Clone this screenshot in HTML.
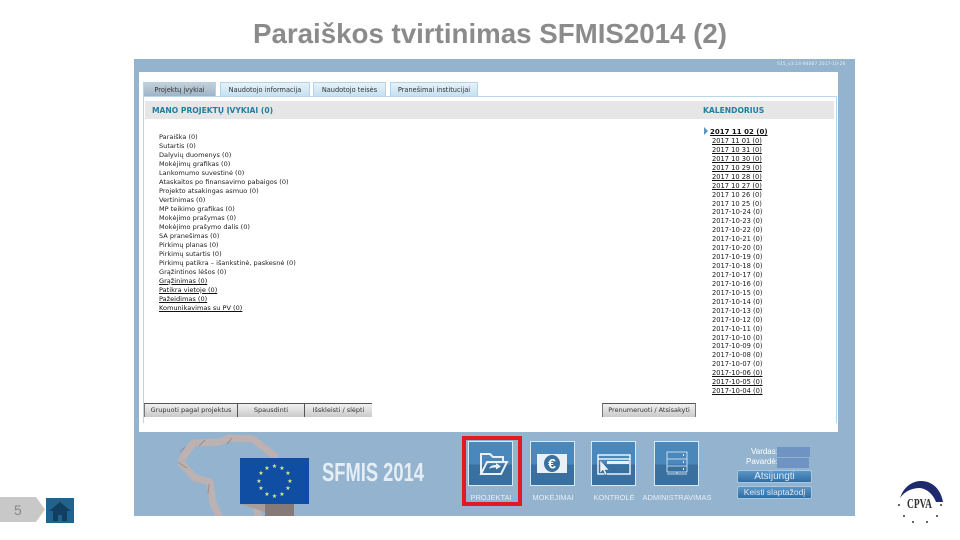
<!DOCTYPE html>
<html lang="lt"><head><meta charset="utf-8"><title>SFMIS2014</title>
<style>
html,body{margin:0;padding:0;background:#fff}
body{width:960px;height:540px;position:relative;overflow:hidden;font-family:"DejaVu Sans","Liberation Sans",sans-serif}
.a{position:absolute}
.title{left:253px;top:15px;width:474px;font:bold 27.7px/38px "Liberation Sans",sans-serif;color:#8b8b8b;white-space:nowrap}
.wrap{left:0;top:0;width:960px;height:540px;filter:blur(.35px)}
.panel{left:134px;top:59px;width:721px;height:457px;background:#94b3ce}
.white{left:139px;top:72px;width:699px;height:360px;background:#fff}
.tab{top:82px;height:14px;background:linear-gradient(#e6f2fa,#c4e0f2);border:1px solid #b5d3e6;border-bottom:0;box-sizing:border-box;font-size:6.6px;line-height:14px;text-align:center;color:#333;white-space:nowrap}
.frame{left:143px;top:96px;width:694px;height:327px;border:1px solid #b9d6e8;border-bottom:0;box-sizing:border-box}
.bar{left:145px;top:101px;width:689px;height:18px;background:#e6e6e6}
.h{font-size:7.6px;font-weight:bold;color:#1e7fa0;top:105px;line-height:11px;white-space:nowrap}
.row{left:159px;font-size:6.57px;line-height:9px;color:#222;white-space:nowrap;margin-top:.5px}
.cal{left:712px;font-size:6.7px;line-height:9px;color:#222;white-space:nowrap}
.u{text-decoration:underline;color:#111}
.btn{top:403px;height:14px;background:linear-gradient(#f0f0f0,#c9c9c9);border-top:1px solid #555;box-sizing:border-box;font-size:6.5px;line-height:13px;text-align:center;color:#333;white-space:nowrap}
.tile{top:441px;width:45px;height:45px;box-sizing:border-box;border:1px solid #d8e8f4;background:linear-gradient(#4a88bc 0,#4a88bc 52%,#39709f 52%,#39709f 100%)}
.lab{top:493px;font:7.5px/10px "Liberation Sans",sans-serif;color:#e6eff6;text-align:center;white-space:nowrap}
.side{font:8px/10px "Liberation Sans",sans-serif;color:#fff;white-space:nowrap}
.sbtn{left:737px;width:75px;height:13px;box-sizing:border-box;background:linear-gradient(#5b95c6,#2f6ea5);border:1px solid #a9c8e0;border-radius:2px;color:#dfeaf4;font:8.5px/11px "Liberation Sans",sans-serif;text-align:center;white-space:nowrap}
</style></head><body>
<div class="a title">Paraiškos tvirtinimas SFMIS2014 (2)</div>
<div class="a wrap">
<div class="a panel"></div>
<div class="a white"></div>
<div class="a" style="left:777px;top:62px;font-size:4.6px;line-height:6px;color:#e4edf4;white-space:nowrap">S15_v3.14-94087 2017-10-26</div>
<div class="a frame"></div>
<div class="a tab" style="left:143px;width:73px;background:linear-gradient(#c3cfd9,#9db5c9);color:#333">Projektų įvykiai</div>
<div class="a tab" style="left:220px;width:90px">Naudotojo informacija</div>
<div class="a tab" style="left:313px;width:73px">Naudotojo teisės</div>
<div class="a tab" style="left:390px;width:88px">Pranešimai institucijai</div>
<div class="a bar"></div>
<div class="a h" style="left:152px">MANO PROJEKTŲ ĮVYKIAI (0)</div>
<div class="a h" style="left:703px">KALENDORIUS</div>

<div class="a row" style="top:132px">Paraiška (0)</div>
<div class="a row" style="top:141px">Sutartis (0)</div>
<div class="a row" style="top:150px">Dalyvių duomenys (0)</div>
<div class="a row" style="top:159px">Mokėjimų grafikas (0)</div>
<div class="a row" style="top:168px">Lankomumo suvestinė (0)</div>
<div class="a row" style="top:177px">Ataskaitos po finansavimo pabaigos (0)</div>
<div class="a row" style="top:186px">Projekto atsakingas asmuo (0)</div>
<div class="a row" style="top:195px">Vertinimas (0)</div>
<div class="a row" style="top:204px">MP teikimo grafikas (0)</div>
<div class="a row" style="top:213px">Mokėjimo prašymas (0)</div>
<div class="a row" style="top:222px">Mokėjimo prašymo dalis (0)</div>
<div class="a row" style="top:231px">SA pranešimas (0)</div>
<div class="a row" style="top:240px">Pirkimų planas (0)</div>
<div class="a row" style="top:249px">Pirkimų sutartis (0)</div>
<div class="a row" style="top:258px">Pirkimų patikra – išankstinė, paskesnė (0)</div>
<div class="a row" style="top:267px">Grąžintinos lėšos (0)</div>
<div class="a row u" style="top:276px">Grąžinimas (0)</div>
<div class="a row u" style="top:285px">Patikra vietoje (0)</div>
<div class="a row u" style="top:294px">Pažeidimas (0)</div>
<div class="a row u" style="top:303px">Komunikavimas su PV (0)</div>

<svg class="a" style="left:703px;top:127px" width="7" height="9"><path d="M1 0l4 4-4 4z" fill="#5b95c6"/></svg>
<div class="a u" style="left:710px;top:127px;font-size:7px;font-weight:bold;line-height:10px;white-space:nowrap">2017 11 02 (0)</div>
<div class="a cal u" style="top:137px">2017 11 01 (0)</div>
<div class="a cal u" style="top:145.900px">2017 10 31 (0)</div>
<div class="a cal u" style="top:154.900px">2017 10 30 (0)</div>
<div class="a cal u" style="top:163.800px">2017 10 29 (0)</div>
<div class="a cal u" style="top:172.700px">2017 10 28 (0)</div>
<div class="a cal u" style="top:181.700px">2017 10 27 (0)</div>
<div class="a cal" style="top:190.600px">2017 10 26 (0)</div>
<div class="a cal" style="top:199.500px">2017 10 25 (0)</div>
<div class="a cal" style="top:208.400px">2017-10-24 (0)</div>
<div class="a cal" style="top:217.400px">2017-10-23 (0)</div>
<div class="a cal" style="top:226.300px">2017-10-22 (0)</div>
<div class="a cal" style="top:235.200px">2017-10-21 (0)</div>
<div class="a cal" style="top:244.200px">2017-10-20 (0)</div>
<div class="a cal" style="top:253.100px">2017-10-19 (0)</div>
<div class="a cal" style="top:262px">2017-10-18 (0)</div>
<div class="a cal" style="top:271px">2017-10-17 (0)</div>
<div class="a cal" style="top:279.900px">2017-10-16 (0)</div>
<div class="a cal" style="top:288.800px">2017-10-15 (0)</div>
<div class="a cal" style="top:297.700px">2017-10-14 (0)</div>
<div class="a cal" style="top:306.700px">2017-10-13 (0)</div>
<div class="a cal" style="top:315.600px">2017-10-12 (0)</div>
<div class="a cal" style="top:324.500px">2017-10-11 (0)</div>
<div class="a cal" style="top:333.500px">2017-10-10 (0)</div>
<div class="a cal" style="top:342.400px">2017-10-09 (0)</div>
<div class="a cal" style="top:351.300px">2017-10-08 (0)</div>
<div class="a cal" style="top:360.300px">2017-10-07 (0)</div>
<div class="a cal u" style="top:369.200px">2017-10-06 (0)</div>
<div class="a cal u" style="top:378.100px">2017-10-05 (0)</div>
<div class="a cal u" style="top:387px">2017-10-04 (0)</div>

<div class="a btn" style="left:144px;width:94px;border-left:1px solid #777;border-right:1px solid #555">Grupuoti pagal projektus</div>
<div class="a btn" style="left:238px;width:67px;border-right:1px solid #555">Spausdinti</div>
<div class="a btn" style="left:305px;width:67px">Išskleisti / slėpti</div>
<div class="a btn" style="left:602px;width:94px;border-left:1px solid #777;border-right:1px solid #777">Prenumeruoti / Atsisakyti</div>

<svg class="a" style="left:134px;top:432px" width="300" height="84" viewBox="134 432 300 84">
<path d="M180 462L193 443L220 442L228 438L253 439L277 458M180 462L195 478L210 482L213 503L220 518M255 503L259 518" fill="none" stroke="#bdb2b1" stroke-width="7" stroke-linejoin="bevel"/>
<path d="M205 440l-6 6M232 438l-5 6M179 463l8 5M185 447l-5 5M209 484l-1 10" stroke="#9a8f8e" stroke-width="1" fill="none"/>
<path d="M265 504h29v12h-29z" fill="#867a78"/>
<path d="M240 504h25v8z" fill="#a89d9b"/>
<rect x="240" y="458" width="69" height="46" fill="#0f4ea3"/>
<g fill="#d8ec8a" font-size="6" font-family="DejaVu Sans" text-anchor="middle">
<text x="274.500" y="468">★</text><text x="282" y="470">★</text><text x="288" y="475">★</text><text x="290" y="483">★</text><text x="288" y="490">★</text><text x="282" y="496">★</text><text x="274.500" y="498">★</text><text x="267" y="496">★</text><text x="261" y="490">★</text><text x="259" y="483">★</text><text x="261" y="475">★</text><text x="267" y="470">★</text>
</g>
<text x="322" y="481" font-family="Liberation Sans" font-weight="bold" font-size="26" fill="#e6eef5" textLength="102" lengthAdjust="spacingAndGlyphs">SFMIS 2014</text>
</svg>

<div class="a" style="left:462px;top:436px;width:60px;height:70px;box-sizing:border-box;border:4px solid #e01a22"></div>
<div class="a tile" style="left:468px"></div>
<div class="a tile" style="left:530px"></div>
<div class="a tile" style="left:591px"></div>
<div class="a tile" style="left:654px"></div>
<svg class="a" style="left:468px;top:441px" width="232" height="45" viewBox="468 441 232 45" fill="none" stroke="#e8f1f8" stroke-width="1.500">
<path d="M481 474V454h9l3 3h10v5M481 474h20l6-12h-20z" stroke-width="2"/>
<path d="M489 469c1-3 3-4 7-4v-2l5 3.500-5 3v-2c-3 0-5 0-7 1.500z" fill="#e8f1f8" stroke="none"/>
<path d="M537 454h30v19h-30z" fill="#e8f1f8" stroke="none"/>
<ellipse cx="552" cy="463.500" rx="8" ry="8.500" fill="#39709f" stroke="none"/>
<text x="552" y="468.500" font-family="Liberation Sans" font-weight="bold" font-size="14" fill="#fff" stroke="none" text-anchor="middle">€</text>
<rect x="598" y="455" width="32" height="19"/>
<path d="M598 459h32"/>
<path d="M607 461h22v3h-22z" fill="#e8f1f8" stroke="none"/>
<path d="M600 460l0 13 3-3 2 5 2-1-2-4 4 0z" fill="#e8f1f8" stroke="#39709f" stroke-width=".5"/>
<path d="M667 452h20v7h-20zM667 459h20v7h-20zM667 466h20v6h-20zM677 472v2M667 474h20" stroke-width=".8"/>
<path d="M683 455h1M683 462h1M683 469h1" stroke-width="2"/>
</svg>
<div class="a lab" style="left:468px;width:46px">PROJEKTAI</div>
<div class="a lab" style="left:530px;width:46px">MOKĖJIMAI</div>
<div class="a lab" style="left:591px;width:46px">KONTROLĖ</div>
<div class="a lab" style="left:640px;width:74px">ADMINISTRAVIMAS</div>

<div class="a side" style="left:751px;top:447px">Vardas:</div>
<div class="a side" style="left:746px;top:457px">Pavardė:</div>
<div class="a" style="left:777px;top:447px;width:33px;height:10px;background:#6f93c2"></div>
<div class="a" style="left:777px;top:458px;width:32px;height:10px;background:#6f93c2"></div>
<div class="a sbtn" style="top:470px;font-size:10px">Atsijungti</div>
<div class="a sbtn" style="top:486px">Keisti slaptažodį</div>
</div>

<div class="a" style="left:0;top:497px;width:45px;height:25px;background:#c8c8c8;clip-path:polygon(0 0,36px 0,45px 12.500px,36px 25px,0 25px)"></div>
<div class="a" style="left:14px;top:502px;font:14px/16px 'Liberation Sans',sans-serif;color:#888">5</div>
<div class="a" style="left:46px;top:498px;width:28px;height:25px;background:#1f6391"></div>
<svg class="a" style="left:46px;top:498px" width="28" height="25"><path d="M3 13L14 4l11 9zM7 13h14v10h-14z" fill="#123f5f"/><path d="M12 17h4v6h-4z" fill="#1f6391"/></svg>

<svg class="a" style="left:895px;top:478px" width="50" height="50" viewBox="895 478 50 50">
<path d="M900 498C904 486 913 481 921 481C933 481 941 490 943 502L936 502C933 494 927 489 920 488C912 488 905 491 900 498Z" fill="#1e2a6e"/>
<text x="907" y="508" font-family="Liberation Serif" font-weight="bold" font-size="14" fill="#333" textLength="25" lengthAdjust="spacingAndGlyphs">CPVA</text>
<g fill="#333"><circle cx="899" cy="505" r="1"/><circle cx="941" cy="505" r="1"/><circle cx="904" cy="516" r="1"/><circle cx="937" cy="516" r="1"/><circle cx="913" cy="522" r="1"/><circle cx="927" cy="522" r="1"/></g>
</svg>
</body></html>
